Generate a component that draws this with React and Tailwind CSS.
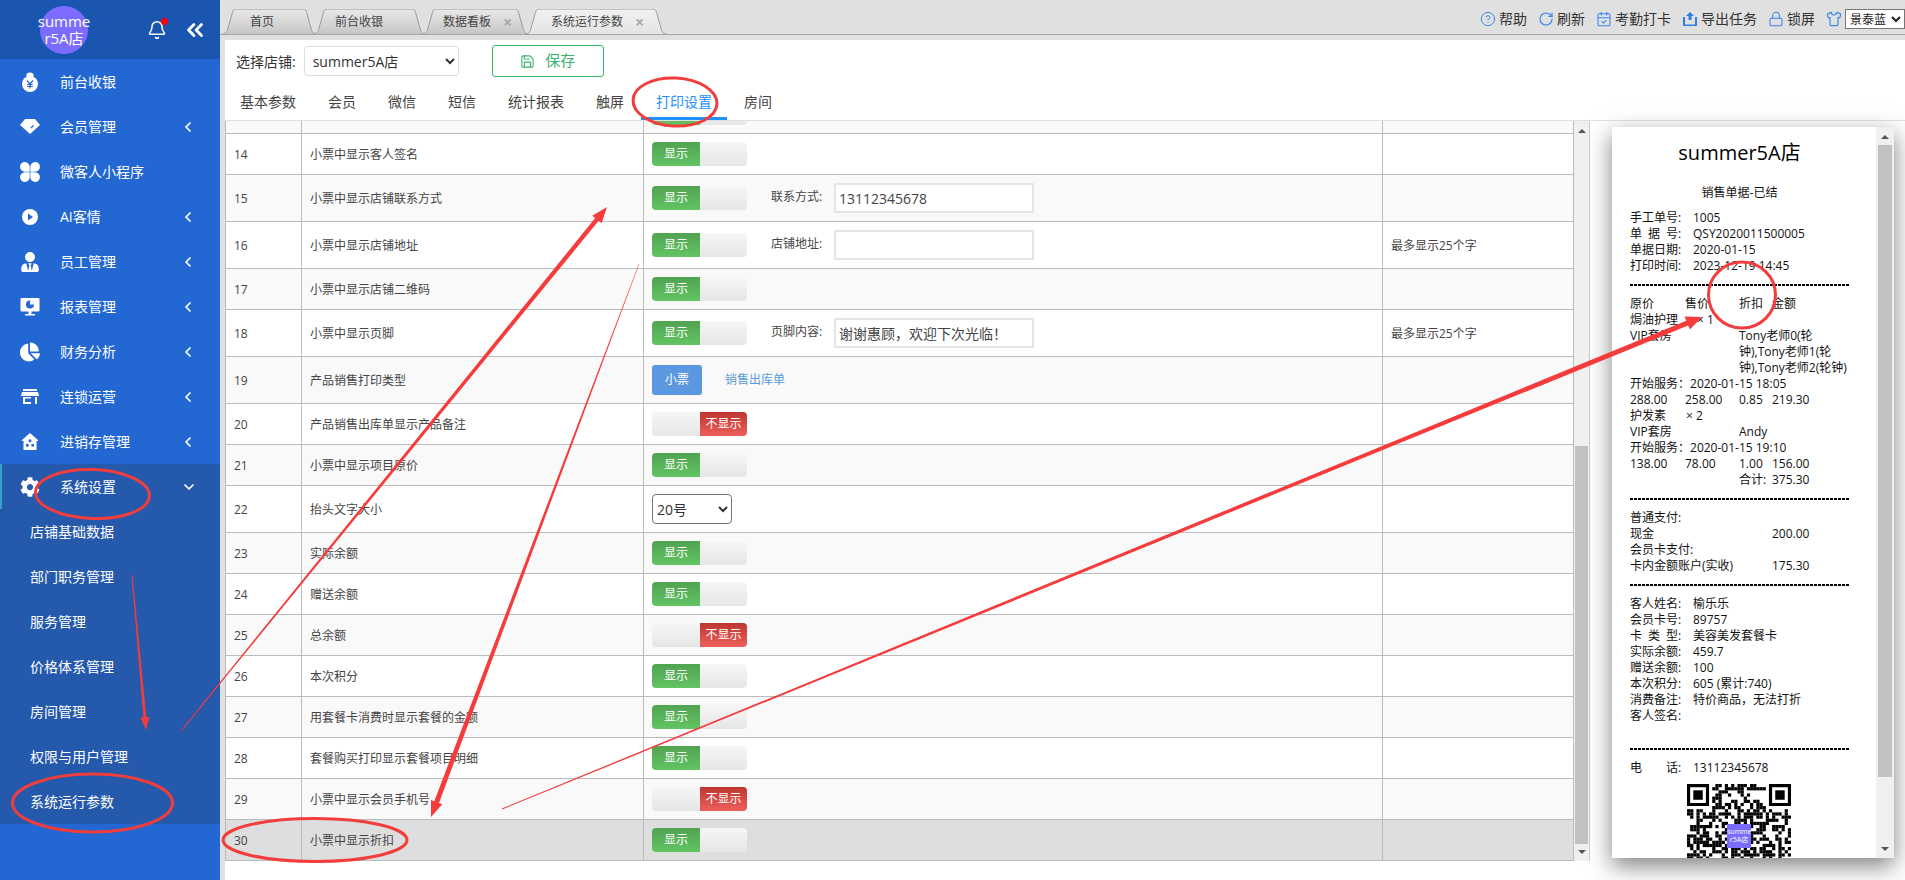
import { ChevronLeft, ChevronDown, ChevronsLeft, Bell, CircleHelp, RotateCw, CalendarCheck, Lock, Shirt, Save } from "lucide-react";
import { FaCog, FaUserTie, FaChartPie } from "react-icons/fa";

const FONT = "font-['Open_Sans','Noto_Sans_CJK_SC',sans-serif]";

// full width punctuation used in the receipt and footer text
const COMMA = "\uFF0C";
const BANG = "\uFF01";
const COLON = "\uFF1A";

// sidebar icons
const BagIcon = () => (
    <svg viewBox="0 0 20 20" className="w-5 h-5">
        <ellipse cx="10" cy="3.2" rx="3.6" ry="2.6" fill="#fff" />
        <circle cx="10" cy="12" r="8" fill="#fff" />
        <path d="M7 8.5l3 3.5 3-3.5M10 12v4.5M7.2 12.5h5.6M7.2 14.5h5.6" stroke="#2368d2" strokeWidth="1.2" fill="none" />
    </svg>
);
const GemIcon = () => (
    <svg viewBox="0 0 20 20" className="w-5 h-5">
        <path d="M5 3h10l5 6-10 9L0 9z" fill="#fff" transform="translate(0 -1)" />
        <path d="M11 11l2.5-2.5" stroke="#2368d2" strokeWidth="1.3" />
    </svg>
);
const CloverIcon = () => (
    <svg viewBox="0 0 20 20" className="w-5 h-5" fill="#fff">
        <path d="M5 0a4.8 4.8 0 0 1 4.7 4.8v4.9H4.8A4.8 4.8 0 0 1 5 0z" />
        <path d="M15 0a4.8 4.8 0 0 0-4.7 4.8v4.9h4.9A4.8 4.8 0 0 0 15 0z" />
        <path d="M5 20a4.8 4.8 0 0 0 4.7-4.8v-4.9H4.8A4.8 4.8 0 0 0 5 20z" />
        <path d="M15 20a4.8 4.8 0 0 1-4.7-4.8v-4.9h4.9A4.8 4.8 0 0 1 15 20z" />
    </svg>
);
const PlayIcon = () => (
    <svg viewBox="0 0 20 20" className="w-5 h-5">
        <circle cx="10" cy="10" r="8" fill="#fff" />
        <path d="M8 6.5l5 3.5-5 3.5z" fill="#2368d2" />
    </svg>
);
const ScreenIcon = () => (
    <svg viewBox="0 0 20 20" className="w-5 h-5">
        <rect x="0.5" y="1" width="19" height="13.5" rx="1" fill="#fff" />
        <rect x="8.5" y="14" width="3" height="3" fill="#fff" />
        <rect x="5" y="17" width="10" height="1.5" fill="#fff" />
        <circle cx="10" cy="7.5" r="4" fill="#2368d2" />
        <path d="M10 7.5V3.5A4 4 0 0 1 14 7.5z" fill="#fff" />
    </svg>
);
const StoreIcon = () => (
    <svg viewBox="0 0 20 20" className="w-5 h-5" fill="#fff">
        <rect x="3" y="2" width="14" height="2" />
        <path d="M2 5h16l1 4H1z" />
        <path d="M3 10h2v7H3zM15 10h2v7h-2zM5 15h6v2H5zM5 10h6v1.5H5z" />
    </svg>
);
const HouseIcon = () => (
    <svg viewBox="0 0 20 20" className="w-5 h-5">
        <path d="M10 1l8 7v1h-1.500v9h-13V9H2V8z" fill="#fff" />
        <rect x="8.700" y="7.500" width="2.600" height="2.600" fill="#2368d2" />
        <rect x="6" y="12" width="2.600" height="2.600" fill="#2368d2" />
        <rect x="11.400" y="12" width="2.600" height="2.600" fill="#2368d2" />
    </svg>
);

const menu = [
    { label: "前台收银", icon: <BagIcon /> },
    { label: "会员管理", icon: <GemIcon />, arrow: true },
    { label: "微客人小程序", icon: <CloverIcon /> },
    { label: "AI客情", icon: <PlayIcon />, arrow: true },
    { label: "员工管理", icon: <FaUserTie className="w-5 h-5 text-white" />, arrow: true },
    { label: "报表管理", icon: <ScreenIcon />, arrow: true },
    { label: "财务分析", icon: <FaChartPie className="w-5 h-5 text-white" />, arrow: true },
    { label: "连锁运营", icon: <StoreIcon />, arrow: true },
    { label: "进销存管理", icon: <HouseIcon />, arrow: true },
];

const subMenu = ["店铺基础数据", "部门职务管理", "服务管理", "价格体系管理", "房间管理", "权限与用户管理", "系统运行参数"];

function Sidebar() {
    return (
        <aside className="w-[220px] shrink-0 bg-[#2368d2] text-white text-sm">
            <div className="h-[59px] bg-[#1a56b0] flex items-center">
                <div className="ml-[40px] w-[48px] h-[48px] rounded-full bg-[#7b6cff] flex flex-col items-center justify-center text-[15px] leading-[17px] whitespace-nowrap">
                    <div>summe</div>
                    <div>r5A店</div>
                </div>
                <div className="relative ml-[59px] w-[20px] h-[22px]">
                    <Bell className="w-[20px] h-[22px]" strokeWidth={1.8} />
                    <span className="absolute -top-[1px] right-[-1px] w-[7px] h-[7px] rounded-full bg-[#f00]" />
                </div>
                <ChevronsLeft className="ml-[15px] w-[26px] h-[26px]" strokeWidth={2.6} />
            </div>
            {menu.map((m) => (
                <div key={m.label} className="h-[45px] flex items-center pl-[20px]">
                    <span className="w-[20px] h-[20px] mr-[20px]">{m.icon}</span>
                    <span>{m.label}</span>
                    {m.arrow && <ChevronLeft className="w-[16px] h-[16px] ml-auto mr-[24px]" strokeWidth={2.6} />}
                </div>
            ))}
            <div className="bg-[#2459ab]">
                <div className="h-[45px] flex items-center pl-[18px] border-l-2 border-[#3aa0c8]">
                    <FaCog className="w-5 h-5 mr-[20px]" />
                    <span>系统设置</span>
                    <ChevronDown className="w-[16px] h-[16px] ml-auto mr-[23px]" strokeWidth={2.6} />
                </div>
                {subMenu.map((s) => (
                    <div key={s} className="h-[45px] flex items-center pl-[30px]">{s}</div>
                ))}
            </div>
        </aside>
    );
}

function Tab({ width, pad, label, close, active }) {
    const w = width;
    const d = `M0 25C4 25 5 23 6 19L10 5C11 1 12 0 15 0H${w - 15}C${w - 12} 0 ${w - 11} 1 ${w - 10} 5L${w - 6} 19C${w - 5} 23 ${w - 4} 25 ${w} 25`;
    return (
        <div className={`relative h-[25px] flex items-center text-xs text-[#444] -ml-[4px] first:ml-0 ${active ? "z-10" : ""}`} style={{ width: w, paddingLeft: pad }}>
            <svg className="absolute inset-0" width={w} height="25">
                <path d={d} fill={`url(#${active ? "tabOn" : "tabOff"})`} stroke="#999" />
            </svg>
            <span className="relative">{label}</span>
            {close && <span className="relative ml-[12px] text-[#aaa] text-base font-bold leading-none">×</span>}
        </div>
    );
}

const ExportIcon = () => (
    <svg viewBox="0 0 16 16" className="w-4 h-4" fill="#2f7fe6">
        <path d="M8 1l4 4H9.500v4h-3V5H4z" />
        <path d="M1 6h2v7.500h10V6h2v9H1z" />
    </svg>
);

function Tool({ icon, label }) {
    return (
        <div className="flex items-center gap-[3px]">
            {icon}
            <span>{label}</span>
        </div>
    );
}

function TopBar() {
    const cls = "w-4 h-4 text-[#3d85ee]";
    return (
        <div className="h-[40px] bg-[#e0e0e0] shrink-0">
            <svg width="0" height="0" className="absolute">
                <defs>
                    <linearGradient id="tabOff" x1="0" y1="0" x2="0" y2="1">
                        <stop offset="0" stopColor="#e9e9e9" />
                        <stop offset="1" stopColor="#c6c6c6" />
                    </linearGradient>
                    <linearGradient id="tabOn" x1="0" y1="0" x2="0" y2="1">
                        <stop offset="0" stopColor="#f1f1f1" />
                        <stop offset="1" stopColor="#e4e4e4" />
                    </linearGradient>
                </defs>
            </svg>
            <div className="h-[35px] border-b border-[#a8a8a8] flex items-end pl-[2px]">
                <div className="flex items-end">
                    <Tab width={95} pad={28} label="首页" />
                    <Tab width={113} pad={22} label="前台收银" />
                    <Tab width={107} pad={21} label="数据看板" close />
                    <Tab width={142} pad={26} label="系统运行参数" close active />
                </div>
                <div className="ml-auto flex items-center gap-[11px] self-start mt-[9px] h-[20px] text-sm text-[#333]">
                    <Tool icon={<CircleHelp className={cls} strokeWidth={1.5} />} label="帮助" />
                    <Tool icon={<RotateCw className={cls} strokeWidth={1.8} />} label="刷新" />
                    <Tool icon={<CalendarCheck className={cls} strokeWidth={1.6} />} label="考勤打卡" />
                    <Tool icon={<ExportIcon />} label="导出任务" />
                    <Tool icon={<Lock className={cls} strokeWidth={1.6} />} label="锁屏" />
                    <div className="flex items-center gap-[3px]">
                        <Shirt className={cls} strokeWidth={1.8} />
                        <select className="w-[60px] h-[20px] bg-white border border-[#767676] text-xs text-[#222]">
                            <option>景泰蓝</option>
                        </select>
                    </div>
                </div>
            </div>
        </div>
    );
}

const navItems = ["基本参数", "会员", "微信", "短信", "统计报表", "触屏", "打印设置", "房间"];

function Toolbar() {
    return (
        <div className="shrink-0">
            <div className="h-[45px] flex items-start text-sm text-[#333]">
                <span className="ml-[11px] mt-[12px] leading-[20px]">选择店铺:</span>
                <select className="ml-[8px] mt-[6px] w-[155px] h-[30px] border border-[#ddd] rounded-[4px] bg-white pl-[4px] text-[#333]">
                    <option>summer5A店</option>
                </select>
                <button className="ml-[33px] mt-[5px] w-[112px] h-[32px] border border-[#3ab56a] rounded-[3px] flex items-center justify-center gap-[10px] text-[15px] text-[#3cb371]">
                    <Save className="w-[15px] h-[15px]" strokeWidth={1.8} />
                    保存
                </button>
            </div>
            <div className="h-[36px] flex gap-[2px] border-b border-[#e0e0e0] text-sm text-[#444]">
                {navItems.map((n) => (
                    <div
                        key={n}
                        className={`h-[35px] px-[15px] pt-[7px] leading-[20px] ${n === "打印设置" ? "text-[#1e90ff] border-b-[3px] border-[#1e90ff]" : ""}`}
                    >
                        {n}
                    </div>
                ))}
            </div>
        </div>
    );
}

function Toggle({ on = true, blank = false }) {
    return (
        <div className="w-[95px] h-[24px] flex rounded-[4px] overflow-hidden text-xs text-white leading-[24px] text-center">
            {on ? (
                <>
                    <div className="w-[48px] bg-gradient-to-b from-[#51a351] to-[#62c462]">{blank ? "" : "显示"}</div>
                    <div className="w-[47px] bg-gradient-to-b from-[#f6f6f6] to-[#e6e6e6]" />
                </>
            ) : (
                <>
                    <div className="w-[48px] bg-gradient-to-b from-[#f6f6f6] to-[#e6e6e6]" />
                    <div className="w-[47px] bg-gradient-to-b from-[#bd362f] to-[#ee5f5b]">不显示</div>
                </>
            )}
        </div>
    );
}

function Field({ label, value }) {
    return (
        <div className="flex items-center">
            <Toggle />
            <span className="ml-[24px] w-[63px] -mt-[2px]">{label}</span>
            <input
                readOnly
                value={value}
                className="w-[200px] h-[30px] border-2 border-[#e5e5e5] bg-white px-[3px] text-sm text-[#444]"
            />
        </div>
    );
}

const rows = [
    { n: 13, num: "", label: "", h: "h-[41px]", cell: <Toggle blank /> },
    { n: 14, label: "小票中显示客人签名", h: "h-[41px]", cell: <Toggle /> },
    { n: 15, label: "小票中显示店铺联系方式", h: "h-[47px]", cell: <Field label="联系方式:" value="13112345678" /> },
    { n: 16, label: "小票中显示店铺地址", h: "h-[47px]", cell: <Field label="店铺地址:" value="" />, note: "最多显示25个字" },
    { n: 17, label: "小票中显示店铺二维码", h: "h-[41px]", cell: <Toggle /> },
    { n: 18, label: "小票中显示页脚", h: "h-[47px]", cell: <Field label="页脚内容:" value={`谢谢惠顾${COMMA}欢迎下次光临${BANG}`} />, note: "最多显示25个字" },
    {
        n: 19,
        label: "产品销售打印类型",
        h: "h-[47px]",
        cell: (
            <div className="flex items-center">
                <div className="w-[50px] h-[30px] rounded-[3px] bg-[#5c98df] text-white text-center leading-[30px]">小票</div>
                <span className="ml-[23px] text-[#5b9bd5]">销售出库单</span>
            </div>
        ),
    },
    { n: 20, label: "产品销售出库单显示产品备注", h: "h-[41px]", cell: <Toggle on={false} /> },
    { n: 21, label: "小票中显示项目原价", h: "h-[41px]", cell: <Toggle /> },
    {
        n: 22,
        label: "抬头文字大小",
        h: "h-[47px]",
        cell: (
            <select className="block w-[80px] h-[30px] border border-[#767676] rounded-[4px] bg-white text-sm text-[#333]">
                <option>20号</option>
            </select>
        ),
    },
    { n: 23, label: "实际余额", h: "h-[41px]", cell: <Toggle /> },
    { n: 24, label: "赠送余额", h: "h-[41px]", cell: <Toggle /> },
    { n: 25, label: "总余额", h: "h-[41px]", cell: <Toggle on={false} /> },
    { n: 26, label: "本次积分", h: "h-[41px]", cell: <Toggle /> },
    { n: 27, label: "用套餐卡消费时显示套餐的金额", h: "h-[41px]", cell: <Toggle /> },
    { n: 28, label: "套餐购买打印显示套餐项目明细", h: "h-[41px]", cell: <Toggle /> },
    { n: 29, label: "小票中显示会员手机号", h: "h-[41px]", cell: <Toggle on={false} /> },
    { n: 30, label: "小票中显示折扣", h: "h-[41px]", cell: <Toggle /> },
];

function SettingsTable() {
    return (
        <div className="flex h-[740px] shrink-0 border-r border-[#ccc]">
            <div className="w-[1348px] overflow-hidden">
                <table className="w-[1348px] table-fixed border-collapse text-xs text-[#444] -mt-[29px]">
                    <colgroup>
                        <col className="w-[76px]" />
                        <col className="w-[342px]" />
                        <col className="w-[739px]" />
                        <col className="w-[191px]" />
                    </colgroup>
                    <tbody>
                        {rows.map((r) => (
                            <tr
                                key={r.n}
                                className={`${r.h} ${r.n === 30 ? "bg-[#dedede]" : r.n % 2 ? "bg-[#f9f9f9]" : "bg-white"}`}
                            >
                                <td className="border border-[#bbb] px-[8px] pt-[1px]">{r.num ?? r.n}</td>
                                <td className="border border-[#bbb] px-[8px] pt-[1px]">{r.label}</td>
                                <td className="border border-[#bbb] px-[8px]">{r.cell}</td>
                                <td className="border border-[#bbb] px-[8px] pt-[1px]">{r.note}</td>
                            </tr>
                        ))}
                    </tbody>
                </table>
            </div>
            <Scrollbar className="w-[16px] border-l border-[#bbb]" thumb="mx-[1px] mt-[325px] h-[398px]" />
        </div>
    );
}

function Scrollbar({ className, thumb }) {
    return (
        <div className={`relative bg-[#f0f0f0] shrink-0 ${className}`}>
            <div className="absolute top-[8px] left-1/2 -translate-x-1/2 w-0 h-0 border-x-[4px] border-x-transparent border-b-[4px] border-b-[#555]" />
            <div className={`bg-[#c1c1c1] ${thumb}`} />
            <div className="absolute bottom-[7px] left-1/2 -translate-x-1/2 w-0 h-0 border-x-[4px] border-x-transparent border-t-[4px] border-t-[#555]" />
        </div>
    );
}

// receipt helpers
function Spread({ text }) {
    return (
        <span className="flex">
            <span className="w-[48px] flex justify-between">
                {text.split("").map((c, i) => (
                    <span key={i}>{c}</span>
                ))}
            </span>
            :
        </span>
    );
}

function Info({ label, spread, children }) {
    return (
        <div className="flex">
            <span className="w-[63px] shrink-0">{spread ? <Spread text={label} /> : label}</span>
            <span>{children}</span>
        </div>
    );
}

function Cols({ a, b, c, d }) {
    return (
        <div className="flex">
            <span className="w-[55px] shrink-0">{a}</span>
            <span className="w-[54px] shrink-0">{b}</span>
            <span className="w-[33px] shrink-0">{c}</span>
            <span>{d}</span>
        </div>
    );
}

function Dash({ className = "mt-[10px]" }) {
    return <div className={`h-[2px] w-[219px] bg-[repeating-linear-gradient(90deg,#000_0,#000_3px,transparent_3px,transparent_4px)] ${className}`} />;
}

// fake qr pattern, only needs to look right at this size
function QrCode() {
    const size = 33;
    const cells = [];
    let seed = 12345;
    const inFinder = (x, y) => (x < 8 && y < 8) || (x >= size - 8 && y < 8) || (x < 8 && y >= size - 8);
    for (let y = 0; y < size; y++) {
        for (let x = 0; x < size; x++) {
            seed = (seed * 1103515245 + 12345) & 0x7fffffff;
            if (!inFinder(x, y) && (seed >> 16) % 100 < 52) {
                cells.push(<rect key={`${x}-${y}`} x={x} y={y} width="1.02" height="1.02" />);
            }
        }
    }
    const finder = (x, y) => (
        <g key={`f${x}${y}`}>
            <path d={`M${x} ${y}h7v7h-7zM${x + 1} ${y + 1}v5h5v-5z`} fillRule="evenodd" />
            <rect x={x + 2} y={y + 2} width="3" height="3" />
        </g>
    );
    return (
        <div className="relative w-[104px] h-[104px] mt-[8px] ml-[57px]">
            <svg viewBox="0 0 33 33" className="w-[104px] h-[104px]" fill="#000">
                {cells}
                {finder(0, 0)}
                {finder(26, 0)}
                {finder(0, 26)}
            </svg>
            <div className="absolute left-[40px] top-[40px] w-[24px] h-[24px] bg-[#7b6cff] text-white text-[7px] leading-[8px] text-center pt-[4px] overflow-hidden whitespace-nowrap">
                <div>summe</div>
                <div>r5A店</div>
            </div>
        </div>
    );
}

function Receipt() {
    return (
        <div className="flex w-[282px] h-[731px] ml-[22px] mt-[6px] bg-white shadow-[0_8px_22px_rgba(0,0,0,0.5)]">
            <div className="w-[264px] pl-[18px] overflow-hidden text-xs leading-[16px] text-[#111]">
                <div className="w-[219px] mt-[10px] h-[32px] text-[20px] leading-[32px] text-center text-black">summer5A店</div>
                <div className="w-[219px] mt-[16px] text-center">销售单据-已结</div>
                <div className="mt-[9px]">
                    <Info label="手工单号:">1005</Info>
                    <Info label="单据号" spread>QSY2020011500005</Info>
                    <Info label="单据日期:">2020-01-15</Info>
                    <Info label="打印时间:">2023-12-19 14:45</Info>
                </div>
                <Dash />
                <div className="mt-[10px]">
                    <Cols a="原价" b="售价" c="折扣" d="金额" />
                    <div className="flex"><span className="w-[67px]">焗油护理</span><span>× 1</span></div>
                    <div className="flex">
                        <span className="w-[109px] shrink-0">VIP套房</span>
                        <span className="w-[110px]">Tony老师0(轮钟),Tony老师1(轮钟),Tony老师2(轮钟)</span>
                    </div>
                    <div>开始服务{COLON}2020-01-15 18:05</div>
                    <Cols a="288.00" b="258.00" c="0.85" d="219.30" />
                    <div className="flex"><span className="w-[56px]">护发素</span><span>× 2</span></div>
                    <div className="flex"><span className="w-[109px]">VIP套房</span><span>Andy</span></div>
                    <div>开始服务{COLON}2020-01-15 19:10</div>
                    <Cols a="138.00" b="78.00" c="1.00" d="156.00" />
                    <Cols a="" b="" c="合计:" d="375.30" />
                </div>
                <Dash />
                <div className="mt-[10px]">
                    <div>普通支付:</div>
                    <div className="flex"><span className="w-[142px]">现金</span><span>200.00</span></div>
                    <div>会员卡支付:</div>
                    <div className="flex"><span className="w-[142px]">卡内金额账户(实收)</span><span>175.30</span></div>
                </div>
                <Dash />
                <div className="mt-[10px]">
                    <Info label="客人姓名:">榆乐乐</Info>
                    <Info label="会员卡号:">89757</Info>
                    <Info label="卡类型" spread>美容美发套餐卡</Info>
                    <Info label="实际余额:">459.7</Info>
                    <Info label="赠送余额:">100</Info>
                    <Info label="本次积分:">605 (累计:740)</Info>
                    <Info label="消费备注:">特价商品{COMMA}无法打折</Info>
                    <Info label="客人签名:" />
                    <div className="h-[16px]" />
                </div>
                <Dash className="mt-[8px]" />
                <div className="mt-[10px]">
                    <Info label="电话" spread>13112345678</Info>
                </div>
                <QrCode />
            </div>
            <Scrollbar className="w-[18px]" thumb="mx-[2px] mt-[18px] h-[632px]" />
        </div>
    );
}

// tapered annotation arrow, thin at the tail and wide at the head
function arrowPoints(x1, y1, x2, y2, tail, neck, headW, headL) {
    const len = Math.hypot(x2 - x1, y2 - y1);
    const ux = (x2 - x1) / len;
    const uy = (y2 - y1) / len;
    const nx = -uy;
    const ny = ux;
    const bx = x2 - ux * headL;
    const by = y2 - uy * headL;
    const p = (x, y, o) => `${x + nx * o},${y + ny * o}`;
    return [p(x1, y1, tail / 2), p(bx, by, neck / 2), p(bx, by, headW / 2), `${x2},${y2}`, p(bx, by, -headW / 2), p(bx, by, -neck / 2), p(x1, y1, -tail / 2)].join(" ");
}

function Annotations() {
    const stroke = { fill: "none", stroke: "#f23d3d", strokeWidth: 3 };
    return (
        <svg className="absolute inset-0 pointer-events-none z-20" width="1905" height="880">
            <g fill="#f53b3b">
                <polygon points={arrowPoints(132, 575, 146, 730, 1, 3, 9, 13)} />
                <polygon points={arrowPoints(181, 731, 607, 207, 1, 4.500, 12, 16)} />
                <polygon points={arrowPoints(639, 264, 431, 817, 0.500, 5, 12, 16)} />
                <polygon points={arrowPoints(502, 809, 1702, 317, 1, 5, 14, 16)} />
            </g>
            <ellipse cx="675" cy="102" rx="42" ry="24" {...stroke} transform="rotate(3 675 102)" />
            <ellipse cx="92.500" cy="494" rx="57" ry="24.500" {...stroke} transform="rotate(2 92 494)" />
            <ellipse cx="92.500" cy="803" rx="80" ry="29" {...stroke} />
            <ellipse cx="315" cy="840" rx="92" ry="21.500" {...stroke} />
            <ellipse cx="1742" cy="295" rx="33.500" ry="33" {...stroke} />
        </svg>
    );
}

export default function App() {
    return (
        <div className={`relative w-[1905px] h-[880px] overflow-hidden flex bg-white ${FONT}`}>
            <Sidebar />
            <main className="flex-1 min-w-0 flex flex-col bg-[#e0e0e0]">
                <TopBar />
                <div className="flex-1 ml-[5px] bg-white flex flex-col">
                    <Toolbar />
                    <div className="flex">
                        <SettingsTable />
                        <Receipt />
                    </div>
                </div>
            </main>
            <Annotations />
        </div>
    );
}
